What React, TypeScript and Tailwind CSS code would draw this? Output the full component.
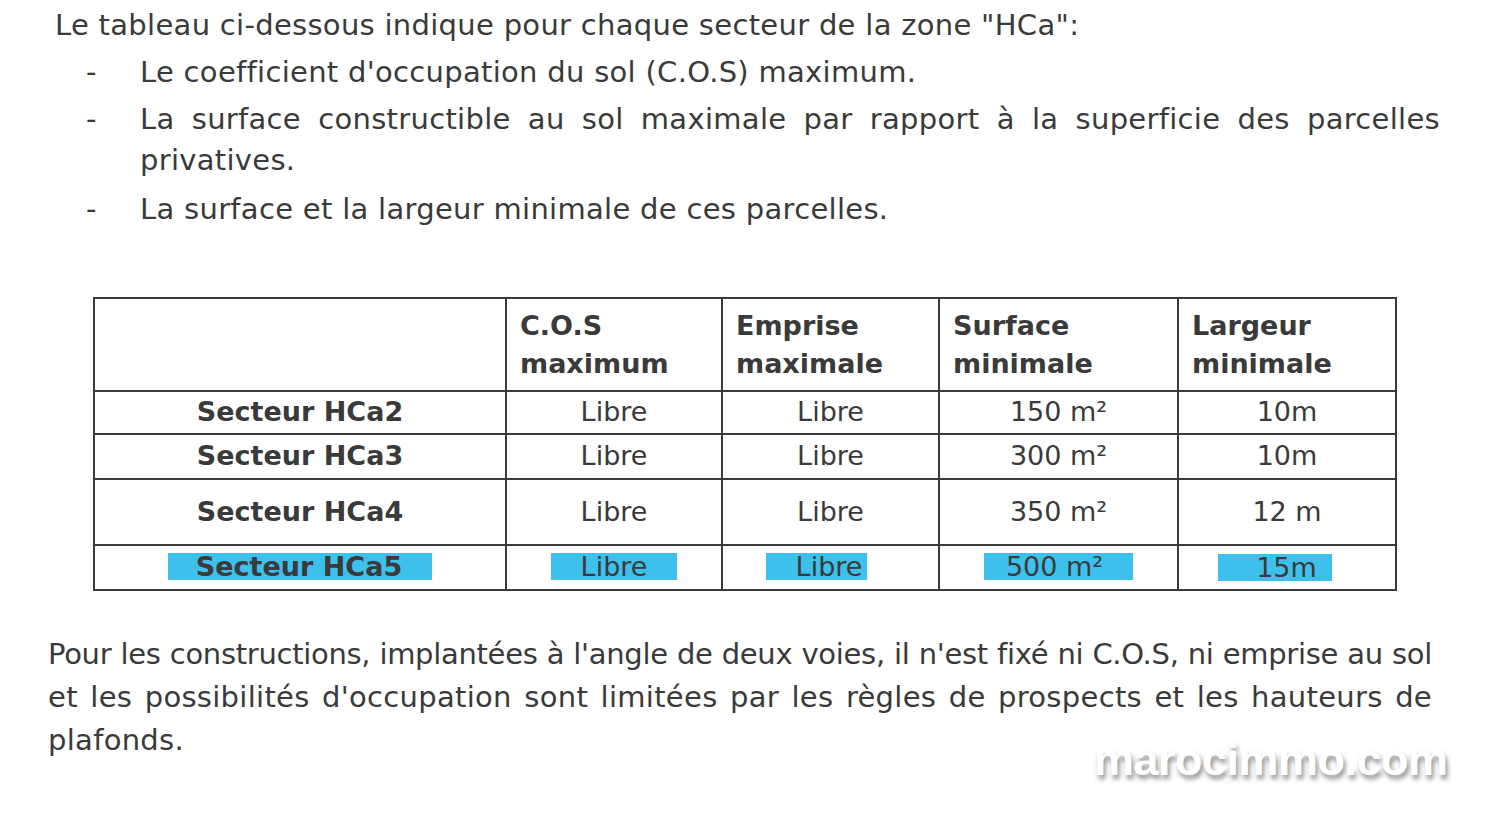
import React from "react";

const F = { fontFamily: '"DejaVu Sans", "Liberation Sans", sans-serif' };

function Hl({ children, cls }: { children: React.ReactNode; cls: string }) {
  return <span className={`inline-block bg-[#3dc1ec] leading-[27px] ${cls}`}>{children}</span>;
}

const J = "block [text-align-last:justify] whitespace-nowrap";

export default function App() {
  return (
    <div
      className="relative w-[1487px] h-[825px] overflow-hidden bg-white text-[#3a3a3a]"
      style={F}
    >
      <div className="flex flex-col text-[29px] tracking-[0.3px]">
        <p className="pl-[55px] pt-[4px] leading-[42px]">
          Le tableau ci-dessous indique pour chaque secteur de la zone "HCa":
        </p>
        <div className="flex mt-[5px] leading-[42px]">
          <span className="w-[140px] shrink-0 pl-[86px]">-</span>
          <span>Le coefficient d'occupation du sol (C.O.S) maximum.</span>
        </div>
        <div className="flex mt-[6px] leading-[41px]">
          <span className="w-[140px] shrink-0 pl-[86px]">-</span>
          <div className="w-[1300px]">
            <span className={J}>La surface constructible au sol maximale par rapport à la superficie des parcelles</span>
            <span className="block">privatives.</span>
          </div>
        </div>
        <div className="flex mt-[8px] leading-[41px]">
          <span className="w-[140px] shrink-0 pl-[86px]">-</span>
          <span>La surface et la largeur minimale de ces parcelles.</span>
        </div>

        <table className="ml-[93px] mt-[67px] w-[1302px] border-collapse table-fixed text-[27px] tracking-normal">
          <colgroup>
            <col className="w-[412px]" />
            <col className="w-[216px]" />
            <col className="w-[217px]" />
            <col className="w-[239px]" />
            <col className="w-[218px]" />
          </colgroup>
          <tbody>
            <tr className="h-[93px]">
              <td className="border-2 border-[#3a3a3a]"></td>
              {[
                ["C.O.S", "maximum"],
                ["Emprise", "maximale"],
                ["Surface", "minimale"],
                ["Largeur", "minimale"],
              ].map(([a, b]) => (
                <td key={a} className="border-2 border-[#3a3a3a] pl-[13px] font-bold leading-[38px] align-middle">
                  {a}
                  <br />
                  {b}
                </td>
              ))}
            </tr>
            {[
              ["Secteur HCa2", "Libre", "Libre", "150 m²", "10m", "h-[43px]"],
              ["Secteur HCa3", "Libre", "Libre", "300 m²", "10m", "h-[45px]"],
              ["Secteur HCa4", "Libre", "Libre", "350 m²", "12 m", "h-[66px]"],
            ].map((r) => (
              <tr key={r[0]} className={r[5]}>
                <td className="border-2 border-[#3a3a3a] text-center font-bold">{r[0]}</td>
                <td className="border-2 border-[#3a3a3a] text-center">{r[1]}</td>
                <td className="border-2 border-[#3a3a3a] text-center">{r[2]}</td>
                <td className="border-2 border-[#3a3a3a] text-center">{r[3]}</td>
                <td className="border-2 border-[#3a3a3a] text-center">{r[4]}</td>
              </tr>
            ))}
            <tr className="h-[42px]">
              <td className="border-2 border-[#3a3a3a] text-center font-bold">
                <Hl cls="pl-[28px] pr-[30px] mt-[4px]">Secteur HCa5</Hl>
              </td>
              <td className="border-2 border-[#3a3a3a] text-center">
                <Hl cls="pl-[30px] pr-[30px]">Libre</Hl>
              </td>
              <td className="border-2 border-[#3a3a3a] text-center">
                <Hl cls="pl-[30px] pr-[5px] -translate-x-[14px]">Libre</Hl>
              </td>
              <td className="border-2 border-[#3a3a3a] text-center">
                <Hl cls="pl-[22px] pr-[30px]">500 m²</Hl>
              </td>
              <td className="border-2 border-[#3a3a3a] text-center">
                <Hl cls="pl-[38px] pr-[15px] mt-[8px] -translate-x-[12px]">15m</Hl>
              </td>
            </tr>
          </tbody>
        </table>

        <div className="ml-[48px] mt-[42px] w-[1384px] leading-[43px]">
          <span className={`${J} tracking-[-0.3px]`}>
            Pour les constructions, implantées à l'angle de deux voies, il n'est fixé ni C.O.S, ni emprise au sol
          </span>
          <span className={J}>
            et les possibilités d'occupation sont limitées par les règles de prospects et les hauteurs de
          </span>
          <span className="block">plafonds.</span>
        </div>
      </div>

      <div
        className="absolute left-[1094px] top-[734px] text-[45px] font-bold leading-[52px] text-white tracking-[-0.5px] [text-shadow:2px_4px_5px_rgba(0,0,0,0.45)]"
        style={{ fontFamily: '"Liberation Sans", Arial, sans-serif' }}
      >
        marocimmo.com
      </div>
    </div>
  );
}
